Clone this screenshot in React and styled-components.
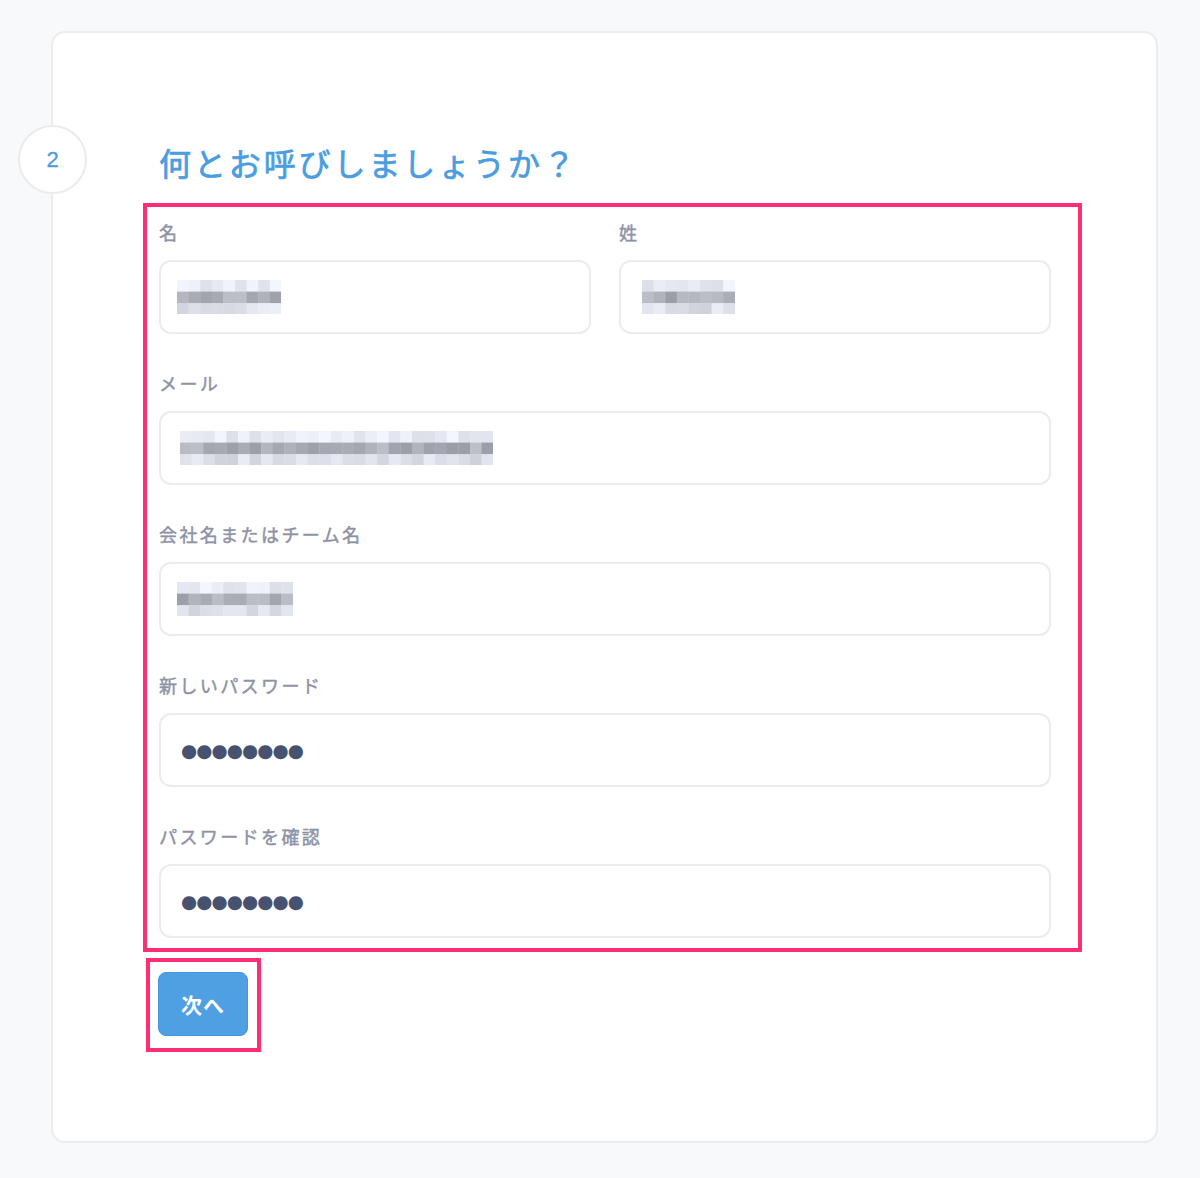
import React from "react";
import styled, { createGlobalStyle } from "styled-components";

const Global = createGlobalStyle`
  html, body { margin: 0; padding: 0; background: #f8f9fb; }
  body { font-family: "Noto Sans CJK JP", "Noto Sans", sans-serif; }
  * { box-sizing: border-box; }
`;

const Page = styled.div`
  padding: 31px 0 35px 51px;
`;

const Card = styled.section`
  position: relative;
  width: 1107px;
  background: #ffffff;
  border: 2px solid #ececef;
  border-radius: 14px;
  padding: 109px 0 89px 90px;
`;

const StepBadge = styled.div`
  position: absolute;
  left: -35px;
  top: 92px;
  width: 69px;
  height: 69px;
  border-radius: 50%;
  background: #ffffff;
  border: 2px solid #ebebed;
  display: flex;
  align-items: center;
  justify-content: center;
  color: #4a9de0;
  font-family: "Liberation Sans", Arial, sans-serif;
  font-size: 22px;
  -webkit-text-stroke: 0.3px #4a9de0;
`;

const Title = styled.h2`
  margin: 0 0 21px 16px;
  font-size: 32px;
  line-height: 40px;
  font-weight: 400;
  -webkit-text-stroke: 0.7px #4a9de0;
  letter-spacing: 2.9px;
  color: #4a9de0;
`;

const Highlight = styled.div`
  border: 4px solid #ff2d72;
  padding: ${(p) => p.$pad};
  width: ${(p) => p.$width};
`;

const Grid = styled.div`
  display: grid;
  grid-template-columns: 1fr 1fr;
  column-gap: 28px;
  row-gap: 37px;
`;

const Field = styled.label`
  display: flex;
  flex-direction: column;
  gap: 16px;
  grid-column: ${(p) => (p.$full ? "1 / -1" : "auto")};
`;

const LabelText = styled.span`
  font-size: 18px;
  line-height: 24px;
  font-weight: 400;
  -webkit-text-stroke: 0.45px #8d92a5;
  letter-spacing: 2.4px;
  color: #8d92a5;
`;

const InputBox = styled.div`
  height: 74px;
  border: 2px solid #ececef;
  border-radius: 12px;
  background: #ffffff;
  display: flex;
  align-items: center;
  padding-left: 14px;
`;

const PasswordInput = styled.input`
  border: none;
  outline: none;
  background: transparent;
  width: 100%;
  height: 100%;
  padding: 0 0 0 6px;
  font-family: "DejaVu Sans", sans-serif;
  font-size: 18.5px;
  letter-spacing: -0.9px;
  color: #475270;
`;

const MosaicSvg = styled.svg`
  display: block;
  margin-left: ${(p) => p.$offset || 0}px;
`;

const Button = styled.button`
  width: 90px;
  height: 64px;
  border: 1px solid #4395dd;
  border-radius: 8px;
  background: #4f9fe3;
  color: #ffffff;
  font-family: "Noto Sans CJK JP", sans-serif;
  font-size: 21px;
  font-weight: 700;
  letter-spacing: 1px;
  cursor: pointer;
`;

const ButtonWrap = styled.div`
  margin: 6px 0 0 3px;
  display: inline-block;
  border: 4px solid #ff2d72;
  padding: 10px 9px 12px 8px;
`;

function shade(seed, i, r) {
  const x = Math.sin(seed * 12.9898 + i * 78.233 + r * 37.719) * 43758.5453;
  return x - Math.floor(x);
}

function Mosaic({ cols, seed, offset }) {
  const cell = 11.6;
  const rows = [];
  for (let r = 0; r < 3; r++) {
    for (let i = 0; i < cols; i++) {
      const n = shade(seed, i, r);
      let l;
      if (r === 1) l = 160 + Math.round(n * 35);
      else if (r === 0) l = 226 + Math.round(n * 24);
      else l = 212 + Math.round(n * 30);
      const c = `rgb(${l - 6},${l - 4},${l + 6})`;
      rows.push(
        <rect key={`${r}-${i}`} x={i * cell} y={r * cell} width={cell + 0.3} height={cell + 0.3} fill={c} />
      );
    }
  }
  return (
    <MosaicSvg $offset={offset} width={cols * cell} height={cell * 3} viewBox={`0 0 ${cols * cell} ${cell * 3}`}>
      {rows}
    </MosaicSvg>
  );
}

export default function App() {
  return (
    <>
      <Global />
      <Page>
        <Card>
          <StepBadge>2</StepBadge>
          <Title>何とお呼びしましょうか？</Title>
          <Highlight $width="939px" $pad="13px 27px 10px 12px">
            <Grid>
              <Field>
                <LabelText>名</LabelText>
                <InputBox>
                  <Mosaic cols={9} seed={1} offset={2} />
                </InputBox>
              </Field>
              <Field>
                <LabelText>姓</LabelText>
                <InputBox>
                  <Mosaic cols={8} seed={2} offset={7} />
                </InputBox>
              </Field>
              <Field $full>
                <LabelText>メール</LabelText>
                <InputBox>
                  <Mosaic cols={27} seed={3} offset={5} />
                </InputBox>
              </Field>
              <Field $full>
                <LabelText>会社名またはチーム名</LabelText>
                <InputBox>
                  <Mosaic cols={10} seed={4} offset={2} />
                </InputBox>
              </Field>
              <Field $full>
                <LabelText>新しいパスワード</LabelText>
                <InputBox>
                  <PasswordInput type="text" readOnly value="●●●●●●●●" aria-label="新しいパスワード" />
                </InputBox>
              </Field>
              <Field $full>
                <LabelText>パスワードを確認</LabelText>
                <InputBox>
                  <PasswordInput type="text" readOnly value="●●●●●●●●" aria-label="パスワードを確認" />
                </InputBox>
              </Field>
            </Grid>
          </Highlight>
          <ButtonWrap>
            <Button type="button">次へ</Button>
          </ButtonWrap>
        </Card>
      </Page>
    </>
  );
}
